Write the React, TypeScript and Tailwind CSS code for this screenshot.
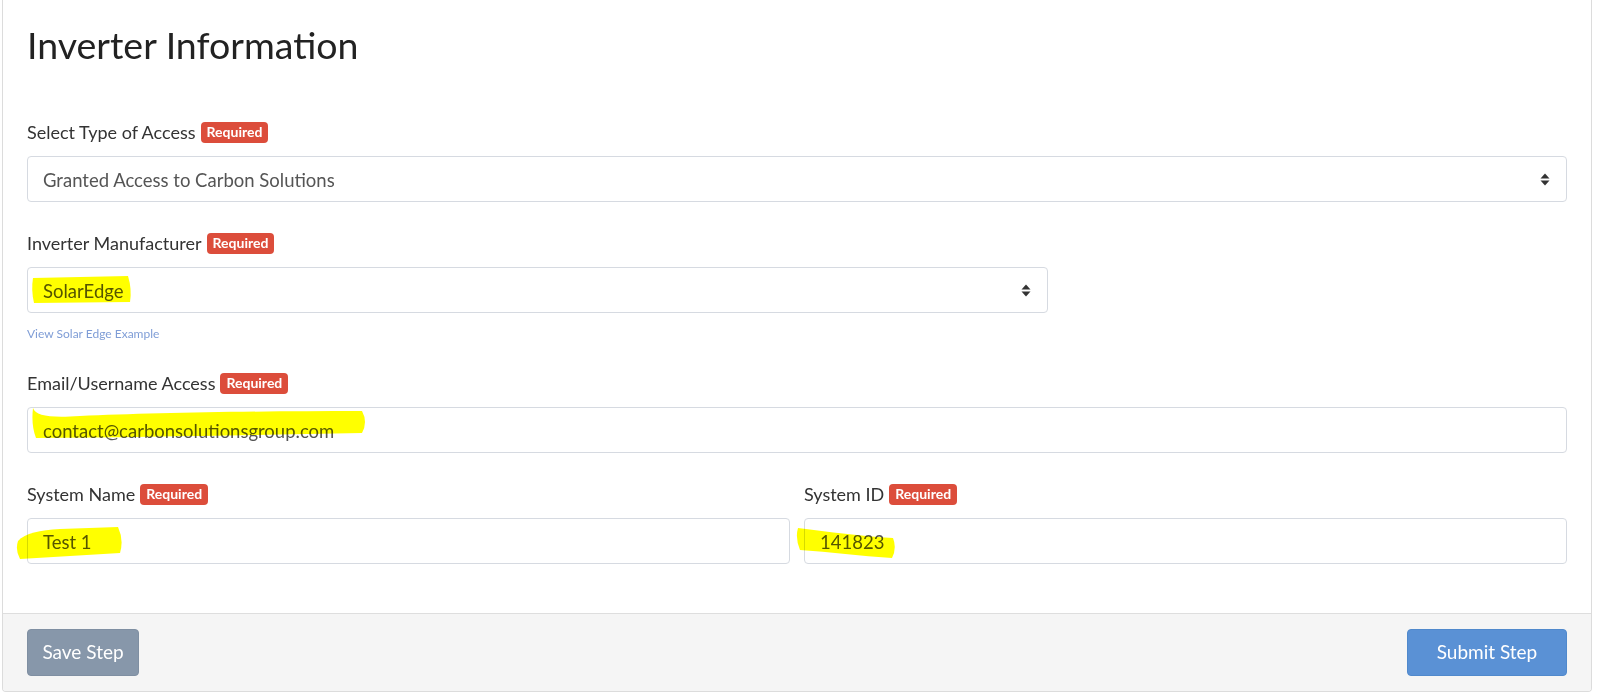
import React from "react";

type LabelProps = { text: string };

const Required: React.FC = () => (
  <span className="inline-flex h-[21px] items-center rounded-[4px] bg-[#dc4d3b] px-[6px] text-[14px] font-bold leading-none text-white">
    Required
  </span>
);

const FieldLabel: React.FC<LabelProps> = ({ text }) => (
  <div className="flex h-[22px] items-center gap-[5px]">
    <span className="text-[18px] text-[#333]">{text}</span>
    <Required />
  </div>
);

const SortArrows: React.FC = () => (
  <svg width="10" height="13" viewBox="0 0 10 13" className="shrink-0">
    <path d="M5 0.5 L9.5 5.5 L0.5 5.5 Z" fill="#333" />
    <path d="M5 12.5 L9.5 7.5 L0.5 7.5 Z" fill="#333" />
  </svg>
);

const SelectBox: React.FC<{ value: string; className?: string }> = ({
  value,
  className,
}) => (
  <div
    className={`flex h-[46px] items-center justify-between rounded-[4px] border border-[#d6dae1] bg-white pl-[15px] pr-[16px] pt-[3px] text-[18.5px] text-[#555] ${className ?? ""}`}
  >
    <span>{value}</span>
    <span className="-mt-[3px] flex">
      <SortArrows />
    </span>
  </div>
);

const TextBox: React.FC<{ value: string }> = ({ value }) => (
  <div className="flex h-[46px] items-center rounded-[4px] border border-[#d6dae1] bg-white px-[15px] pt-[3px] text-[18.5px] text-[#555]">
    {value}
  </div>
);

// marker strokes drawn over the filled-in values
const Highlights: React.FC = () => (
  <svg
    width="1600"
    height="694"
    viewBox="0 0 1600 694"
    className="pointer-events-none absolute left-0 top-0 mix-blend-multiply"
  >
    <g fill="#ffff00">
      <path d="M33 278 L128 276 Q132 289 130 302 L34 303 Q31 290 33 278 Z" />
      <path d="M33 408 C36 416 50 418 80 416 C150 413 250 411 362 411 Q368 422 362 433 C250 435 150 437 36 438 Q31 425 33 408 Z" />
      <path d="M18 541 C25 533 40 530 60 529 L118 527 Q124 540 120 553 L20 559 Q15 550 18 541 Z" />
      <path d="M798 528 C830 532 860 536 893 538 Q897 548 892 558 C860 556 830 552 800 550 Q795 538 798 528 Z" />
    </g>
  </svg>
);

export default function App() {
  return (
    <div className="relative min-h-[694px] bg-white font-['Lato',sans-serif]">
      <div className="ml-[2px] w-[1590px] overflow-hidden rounded-b-[4px] border-x border-b border-[#dcdcdc] bg-white">
        <div className="px-[24px] pb-[49px] pt-[22px]">
          <h1 className="text-[37.5px] font-normal leading-[46px] text-[#222]">
            Inverter Information
          </h1>

          <div className="mt-[53px]">
            <FieldLabel text="Select Type of Access" />
            <SelectBox
              className="mt-[13px]"
              value="Granted Access to Carbon Solutions"
            />
          </div>

          <div className="mt-[30px]">
            <FieldLabel text="Inverter Manufacturer" />
            <SelectBox className="mt-[13px] w-[1021px]" value="SolarEdge" />
            <a className="mt-[13px] block h-[16px] text-[12px] leading-[16px] text-[#7f9dd6]">
              View Solar Edge Example
            </a>
          </div>

          <div className="mt-[30px]">
            <FieldLabel text="Email/Username Access" />
            <div className="mt-[13px]">
              <TextBox value="contact@carbonsolutionsgroup.com" />
            </div>
          </div>

          <div className="mt-[30px] grid grid-cols-2 gap-[14px]">
            <div>
              <FieldLabel text="System Name" />
              <div className="mt-[13px]">
                <TextBox value="Test 1" />
              </div>
            </div>
            <div>
              <FieldLabel text="System ID" />
              <div className="mt-[13px]">
                <TextBox value="141823" />
              </div>
            </div>
          </div>
        </div>

        <div className="flex items-center justify-between border-t border-[#dedede] bg-[#f5f5f5] px-[24px] pb-[15px] pt-[15px]">
          <button className="h-[47px] w-[112px] rounded-[4px] border border-[#7f8fa2] bg-[#8797aa] text-[19px] text-white">
            Save Step
          </button>
          <button className="h-[47px] w-[160px] rounded-[4px] border border-[#5089cc] bg-[#5a91d5] text-[19px] text-white">
            Submit Step
          </button>
        </div>
      </div>
      <Highlights />
    </div>
  );
}
